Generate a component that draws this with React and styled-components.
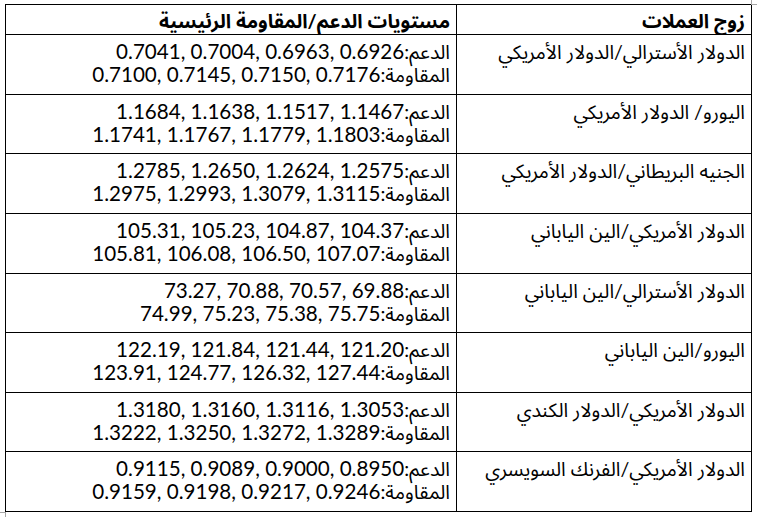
import React from "react";
import styled, { createGlobalStyle } from "styled-components";

const Global = createGlobalStyle`
  html, body { margin: 0; padding: 0; background: #ffffff; }
  body {
    font-family: "Lato", "Noto Sans Arabic", "Noto Sans", "DejaVu Sans", sans-serif;
    color: #000000;
  }
`;

const Page = styled.div`
  position: relative;
  width: 757px;
  height: 517px;
  overflow: hidden;
  padding: 4px 0 0 5px;
  box-sizing: border-box;
`;

const Table = styled.div`
  direction: rtl;
  display: grid;
  grid-template-columns: 295px 451px;
  grid-template-rows: 30px 60px 59px 60px 60px 59px 60px 59px 60px;
  width: 747px;
  box-sizing: border-box;
  border-top: 1px solid #000;
  border-right: 1px solid #000;
`;

const Cell = styled.div`
  box-sizing: border-box;
  border-left: 1px solid #000;
  border-bottom: 1px solid #000;
  padding: ${(p) => (p.$head ? "4px" : "5px")} 6px 0 6px;
  font-size: 19.5px;
  line-height: 23px;
  font-weight: ${(p) => (p.$head ? 700 : 400)};
  text-align: right;
  white-space: nowrap;
  overflow: hidden;
`;

const Line = styled.div`
  display: block;
  height: 23px;
`;

const Nums = styled.span`
  direction: ltr;
  unicode-bidi: isolate;
  font-family: "Lato", "Liberation Sans", sans-serif;
  font-size: 20.6px;
  line-height: 1;
`;

const Mark = styled.span`
  position: absolute;
  width: 5px;
  height: 4px;
  border-color: #a6a6a6;
  border-style: solid;
  border-width: 0;
  ${(p) =>
    p.$corner === "tr"
      ? "top: 0; right: 0; border-left-width: 1px; border-bottom-width: 1px;"
      : "left: 0; top: 512px; height: 5px; border-right-width: 1px; border-top-width: 1px;"}
`;

const rows = [
  ["الدولار الأسترالي/الدولار الأمريكي", "0.7041, 0.7004, 0.6963, 0.6926", "0.7100, 0.7145, 0.7150, 0.7176"],
  ["اليورو/ الدولار الأمريكي", "1.1684, 1.1638, 1.1517, 1.1467", "1.1741, 1.1767, 1.1779, 1.1803"],
  ["الجنيه البريطاني/الدولار الأمريكي", "1.2785, 1.2650, 1.2624, 1.2575", "1.2975, 1.2993, 1.3079, 1.3115"],
  ["الدولار الأمريكي/الين الياباني", "105.31, 105.23, 104.87, 104.37", "105.81, 106.08, 106.50, 107.07"],
  ["الدولار الأسترالي/الين الياباني", "73.27, 70.88, 70.57, 69.88", "74.99, 75.23, 75.38, 75.75"],
  ["اليورو/الين الياباني", "122.19, 121.84, 121.44, 121.20", "123.91, 124.77, 126.32, 127.44"],
  ["الدولار الأمريكي/الدولار الكندي", "1.3180, 1.3160, 1.3116, 1.3053", "1.3222, 1.3250, 1.3272, 1.3289"],
  ["الدولار الأمريكي/الفرنك السويسري", "0.9115, 0.9089, 0.9000, 0.8950", "0.9159, 0.9198, 0.9217, 0.9246"],
];

export default function App() {
  return (
    <>
      <Global />
      <Page>
        <Table>
          <Cell $head>زوج العملات</Cell>
          <Cell $head>مستويات الدعم/المقاومة الرئيسية</Cell>
          {rows.map(([pair, sup, res]) => (
            <React.Fragment key={pair}>
              <Cell>{pair}</Cell>
              <Cell>
                <Line>
                  الدعم:<Nums>{sup}</Nums>
                </Line>
                <Line>
                  المقاومة:<Nums>{res}</Nums>
                </Line>
              </Cell>
            </React.Fragment>
          ))}
        </Table>
        <Mark $corner="tr" />
        <Mark $corner="bl" />
      </Page>
    </>
  );
}
